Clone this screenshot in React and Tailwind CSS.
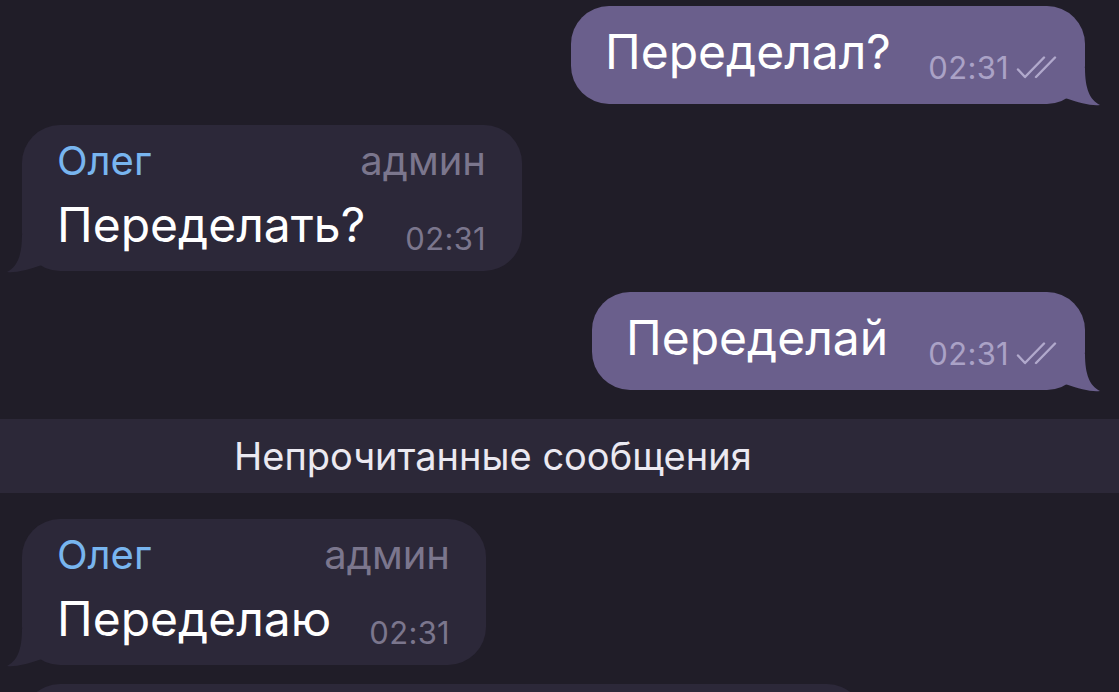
import React from 'react';

const font = { fontFamily: 'Inter, "Noto Sans", sans-serif' };

const Checks = () => (
  <svg width="42" height="24" viewBox="0 0 42 24" fill="none" className="shrink-0">
    <path d="M3 13.5 L10 21 L29 1.5" stroke="#b1a9cc" strokeWidth="2.4" strokeLinecap="round" strokeLinejoin="round" />
    <path d="M21 21 L40 1.5" stroke="#b1a9cc" strokeWidth="2.4" strokeLinecap="round" />
  </svg>
);

const TailRight = ({ color }) => (
  <svg width="45" height="45" viewBox="0 0 45 45" className="absolute right-[-20px] bottom-[-5px]">
    <path d="M25 4 C25 25 30 36 40 41 C31 42 20 39 5 34 L5 4 Z" fill={color} />
  </svg>
);

const TailLeft = ({ color }) => (
  <svg width="45" height="45" viewBox="0 0 45 45" className="absolute left-[-20px] bottom-[-5px]">
    <path d="M20 4 C20 25 15 36 5 41 C14 42 25 39 40 34 L40 4 Z" fill={color} />
  </svg>
);

function Outgoing({ text, width }) {
  return (
    <div className={`relative h-[98px] rounded-[38px] bg-[#6a5f8c] flex items-start pl-[34px] pr-[28px] pt-[18px] ${width}`}>
      <TailRight color="#6a5f8c" />
      <span className="relative text-[48px] leading-[56px] text-white whitespace-nowrap">{text}</span>
      <div className="relative ml-auto mt-[29px] flex items-center gap-[6px]">
        <span className="text-[31px] leading-[30px] tracking-[0.3px] text-[#aaa2c6]">02:31</span>
        <Checks />
      </div>
    </div>
  );
}

function Incoming({ text, width }) {
  return (
    <div className={`relative h-[146px] rounded-[38px] bg-[#2c2839] pl-[35px] pr-[36px] pt-[12px] ${width}`}>
      <TailLeft color="#2c2839" />
      <div className="relative flex justify-between text-[40px] leading-[48px]">
        <span className="text-[#78b5ef]">Олег</span>
        <span className="text-[#7b768d]">админ</span>
      </div>
      <div className="relative mt-[12px] flex items-start">
        <span className="text-[48px] leading-[56px] text-white whitespace-nowrap">{text}</span>
        <span className="ml-auto mt-[27px] text-[31px] leading-[30px] tracking-[0.3px] text-[#7b768d]">02:31</span>
      </div>
    </div>
  );
}

export default function App() {
  return (
    <div className="h-[692px] w-full overflow-hidden bg-[#201d28] flex flex-col" style={font}>
      <div className="shrink-0 flex justify-end pr-[34px] pt-[6px]">
        <Outgoing text="Переделал?" width="w-[514px]" />
      </div>
      <div className="shrink-0 pl-[22px] mt-[21px]">
        <Incoming text="Переделать?" width="w-[500px]" />
      </div>
      <div className="shrink-0 flex justify-end pr-[34px] mt-[21px]">
        <Outgoing text="Переделай" width="w-[493px]" />
      </div>
      <div className="shrink-0 mt-[29px] h-[74px] bg-[#2c2838] flex items-center pl-[234px]">
        <span className="text-[38px] leading-[46px] text-[#ebe9f1] whitespace-nowrap">Непрочитанные сообщения</span>
      </div>
      <div className="shrink-0 pl-[22px] mt-[26px]">
        <Incoming text="Переделаю" width="w-[464px]" />
      </div>
      <div className="shrink-0 pl-[22px] mt-[19px]">
        <div className="w-[843px] h-[120px] rounded-t-[38px] bg-[#2c2839]" />
      </div>
    </div>
  );
}
